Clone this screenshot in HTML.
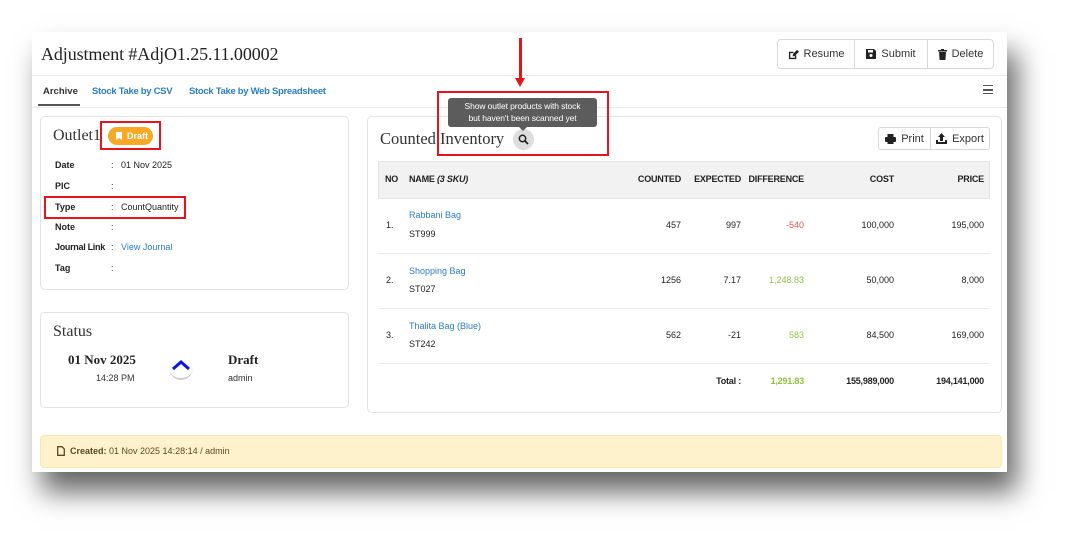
<!DOCTYPE html>
<html><head><meta charset="utf-8"><style>
*{box-sizing:border-box;margin:0;padding:0}
body{width:1072px;height:537px;background:#fff;position:relative;overflow:hidden;font-family:"Liberation Sans",sans-serif;font-size:10px;color:#222}
.a{position:absolute;white-space:nowrap}
.panel{position:absolute;left:32px;top:32px;width:975px;height:440px;background:#fff;box-shadow:10px 20px 26px rgba(0,0,0,.6)}
.serif{font-family:"Liberation Serif",serif}
.card{position:absolute;border:1px solid #e2e2e2;border-radius:5px;background:#fff}
.lbl{font-weight:bold;font-size:9px}
.lnk{color:#2a7ec4}
.btn{position:absolute;border:1px solid #d8d8d8;background:#fff;font-size:11px;color:#333;display:flex;align-items:center;justify-content:center;gap:5px}
.red{position:absolute;border:2.5px solid #e8141b}
.r{text-align:right}
.th{font-weight:bold;font-size:9px;letter-spacing:-.2px;color:#222}
.td{font-size:9px}
</style></head><body>
<div class="panel"></div>
<div class="a serif" style="left:41px;top:44px;font-size:18px;letter-spacing:-.1px;color:#222">Adjustment #AdjO1.25.11.00002</div>
<div class="a" style="left:32px;top:75px;width:975px;height:1px;background:#e8e8e8"></div>
<div class="btn" style="left:777px;top:39px;width:78px;height:30px;border-radius:4px 0 0 4px">
<svg width="11" height="11" viewBox="0 0 12 12"><path d="M1 3h5v1.5H2.5v5h5V7H9v4H1z" fill="#222"/><path d="M5 8l.5-2.5L10 1l2 2-4.5 4.5z" fill="#222"/></svg>Resume</div>
<div class="btn" style="left:854px;top:39px;width:74px;height:30px">
<svg width="10" height="10" viewBox="0 0 10 10"><path d="M0 0h8l2 2v8H0z" fill="#222"/><rect x="2" y="1" width="5" height="2.5" fill="#fff"/><circle cx="5" cy="6.5" r="1.5" fill="#fff"/></svg>Submit</div>
<div class="btn" style="left:927px;top:39px;width:67px;height:30px;border-radius:0 4px 4px 0">
<svg width="9" height="11" viewBox="0 0 9 11"><rect x="0" y="1" width="9" height="1.5" fill="#222"/><rect x="3" y="0" width="3" height="1.5" fill="#222"/><path d="M1 3h7l-.6 8H1.6z" fill="#222"/></svg>Delete</div>
<div class="a" style="left:43px;top:86px;font-size:9.5px;font-weight:bold;color:#333">Archive</div>
<div class="a" style="left:38px;top:104px;width:42px;height:2px;background:#555"></div>
<div class="a lnk" style="left:92px;top:86px;font-size:9.5px;font-weight:bold;letter-spacing:-.3px">Stock Take by CSV</div>
<div class="a lnk" style="left:189px;top:86px;font-size:9.5px;font-weight:bold;letter-spacing:-.3px">Stock Take by Web Spreadsheet</div>
<div class="a" style="left:32px;top:107px;width:975px;height:1px;background:#e8e8e8"></div>
<div class="a" style="left:983px;top:85px;width:10px;height:9px;border-top:1.5px solid #555;border-bottom:1.5px solid #555"></div>
<div class="a" style="left:983px;top:89px;width:10px;height:1.5px;background:#555"></div>

<div class="card" style="left:40px;top:116px;width:309px;height:174px"></div>
<div class="a serif" style="left:53px;top:127px;font-size:16px;color:#333">Outlet1</div>
<div class="a" style="left:108px;top:127px;width:45px;height:18px;border-radius:9px;background:#f7a825;color:#fff;font-weight:bold;font-size:9px;padding:4px 0 0 8px">
<span style="display:inline-block;width:6px;height:8px;background:#fff;vertical-align:-1px;margin-right:5px;clip-path:polygon(0 0,100% 0,100% 100%,50% 75%,0 100%)"></span>Draft</div>
<div class="red" style="left:100px;top:121px;width:61px;height:29px"></div>
<div class="a lbl" style="left:55px;top:160px">Date</div><div class="a td" style="left:111px;top:160px">:&nbsp;&nbsp;&nbsp;01 Nov 2025</div>
<div class="a lbl" style="left:55px;top:181px">PIC</div><div class="a td" style="left:111px;top:181px">:</div>
<div class="a lbl" style="left:55px;top:202px">Type</div><div class="a td" style="left:111px;top:202px">:&nbsp;&nbsp;&nbsp;CountQuantity</div>
<div class="red" style="left:44px;top:196px;width:142px;height:23px"></div>
<div class="a lbl" style="left:55px;top:222px">Note</div><div class="a td" style="left:111px;top:222px">:</div>
<div class="a lbl" style="left:55px;top:242px;letter-spacing:-.3px">Journal Link</div><div class="a td" style="left:111px;top:242px">:&nbsp;&nbsp;&nbsp;<span class="lnk">View Journal</span></div>
<div class="a lbl" style="left:55px;top:263px">Tag</div><div class="a td" style="left:111px;top:263px">:</div>

<div class="card" style="left:40px;top:312px;width:309px;height:96px"></div>
<div class="a serif" style="left:53px;top:323px;font-size:16px;color:#333">Status</div>
<div class="a serif" style="left:68px;top:352px;font-size:13px;font-weight:bold">01 Nov 2025</div>
<div class="a" style="left:96px;top:373px;font-size:9px;color:#333">14:28 PM</div>
<div class="a" style="left:169px;top:356px;width:24px;height:24px;border-radius:50%;border-bottom:2px solid #ccc"></div>
<svg class="a" style="left:171px;top:359px" width="20" height="12" viewBox="0 0 20 12"><path d="M2 10L10 3l8 7" stroke="#0a15e0" stroke-width="3" fill="none"/></svg>
<div class="a serif" style="left:228px;top:352px;font-size:13px;font-weight:bold">Draft</div>
<div class="a" style="left:228px;top:373px;font-size:9px;color:#333">admin</div>

<div class="card" style="left:367px;top:116px;width:635px;height:297px"></div>
<div class="a serif" style="left:380px;top:129px;font-size:16.5px;color:#333">Counted Inventory</div>
<div class="a" style="left:513px;top:129px;width:21px;height:21px;border-radius:50%;background:#ddd"></div>
<svg class="a" style="left:518px;top:134px" width="11" height="11" viewBox="0 0 11 11"><circle cx="4.5" cy="4.5" r="3.2" stroke="#222" stroke-width="1.5" fill="none"/><path d="M7 7l3 3" stroke="#222" stroke-width="1.8"/></svg>
<div class="a" style="left:448px;top:98px;width:149px;height:29px;background:#5c5c5c;border-radius:3px;color:#fff;font-size:8.5px;text-align:center;line-height:12px;padding-top:2px;letter-spacing:-.1px">Show outlet products with stock<br>but haven't been scanned yet</div>
<div class="a" style="left:518px;top:126px;border:5px solid transparent;border-top-color:#5c5c5c;width:0;height:0"></div>
<div class="red" style="left:437px;top:91px;width:172px;height:65px"></div>
<div class="a" style="left:519px;top:38px;width:2.5px;height:42px;background:#e8141b"></div>
<div class="a" style="left:515px;top:78px;border:5px solid transparent;border-top:9px solid #e8141b;width:0;height:0"></div>

<div class="btn" style="left:878px;top:127px;width:53px;height:23px;border-radius:3px 0 0 3px">
<svg width="11" height="10" viewBox="0 0 11 10"><rect x="2.5" y="0" width="6" height="3" fill="#222"/><rect x="0" y="3" width="11" height="5" rx="1" fill="#222"/><rect x="2.5" y="6.5" width="6" height="3.5" fill="#222"/></svg>Print</div>
<div class="btn" style="left:930px;top:127px;width:60px;height:23px;border-radius:0 3px 3px 0">
<svg width="11" height="11" viewBox="0 0 11 11"><path d="M5.5 0L9 4H7v4H4V4H2z" fill="#222"/><path d="M0 7h2v2h7V7h2v4H0z" fill="#222"/></svg>Export</div>

<div class="a" style="left:378px;top:161px;width:612px;height:38px;background:#f2f2f2;border:1px solid #e6e6e6"></div>
<div class="a th" style="left:385px;top:174px">NO</div>
<div class="a th" style="left:409px;top:174px">NAME <i>(3 SKU)</i></div>
<div class="a th r" style="right:391px;top:174px">COUNTED</div>
<div class="a th r" style="right:331px;top:174px">EXPECTED</div>
<div class="a th r" style="right:268px;top:174px">DIFFERENCE</div>
<div class="a th r" style="right:178px;top:174px">COST</div>
<div class="a th r" style="right:88px;top:174px">PRICE</div>

<div class="a" style="left:378px;top:253px;width:612px;height:1px;background:#e8e8e8"></div>
<div class="a" style="left:378px;top:308px;width:612px;height:1px;background:#e8e8e8"></div>
<div class="a" style="left:378px;top:363px;width:612px;height:1px;background:#e8e8e8"></div>

<div class="a td" style="left:386px;top:220px">1.</div>
<div class="a td lnk" style="left:409px;top:210px">Rabbani Bag</div>
<div class="a td" style="left:409px;top:229px">ST999</div>
<div class="a td r" style="right:391px;top:220px">457</div>
<div class="a td r" style="right:331px;top:220px">997</div>
<div class="a td r" style="right:268px;top:220px;color:#f05050">-540</div>
<div class="a td r" style="right:178px;top:220px">100,000</div>
<div class="a td r" style="right:88px;top:220px">195,000</div>

<div class="a td" style="left:386px;top:275px">2.</div>
<div class="a td lnk" style="left:409px;top:266px">Shopping Bag</div>
<div class="a td" style="left:409px;top:284px">ST027</div>
<div class="a td r" style="right:391px;top:275px">1256</div>
<div class="a td r" style="right:331px;top:275px">7.17</div>
<div class="a td r" style="right:268px;top:275px;color:#8cc43c">1,248.83</div>
<div class="a td r" style="right:178px;top:275px">50,000</div>
<div class="a td r" style="right:88px;top:275px">8,000</div>

<div class="a td" style="left:386px;top:330px">3.</div>
<div class="a td lnk" style="left:409px;top:321px">Thalita Bag (Blue)</div>
<div class="a td" style="left:409px;top:339px">ST242</div>
<div class="a td r" style="right:391px;top:330px">562</div>
<div class="a td r" style="right:331px;top:330px">-21</div>
<div class="a td r" style="right:268px;top:330px;color:#8cc43c">583</div>
<div class="a td r" style="right:178px;top:330px">84,500</div>
<div class="a td r" style="right:88px;top:330px">169,000</div>

<div class="a th r" style="right:331px;top:376px">Total :</div>
<div class="a th r" style="right:268px;top:376px;color:#8cc43c">1,291.83</div>
<div class="a th r" style="right:178px;top:376px">155,989,000</div>
<div class="a th r" style="right:88px;top:376px">194,141,000</div>

<div class="a" style="left:40px;top:435px;width:962px;height:33px;background:#fef2cc;border:1px solid #fbe7ad;border-radius:4px"></div>
<svg class="a" style="left:57px;top:446px" width="8" height="10" viewBox="0 0 8 10"><path d="M.7.7h4.3l2.3 2.3v6.3H.7z" stroke="#5a4a1a" stroke-width="1.3" fill="none"/></svg>
<div class="a" style="left:70px;top:446px;font-size:9px;color:#5a4a1a"><b>Created:</b> 01 Nov 2025 14:28:14 / admin</div>
</body></html>
